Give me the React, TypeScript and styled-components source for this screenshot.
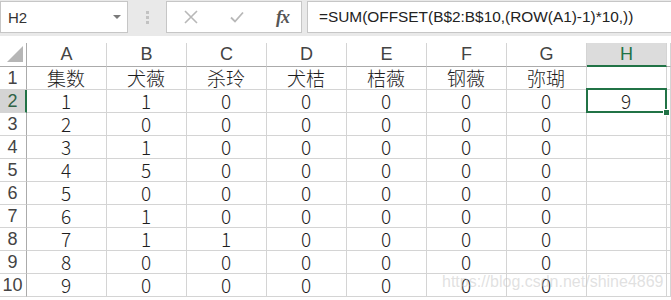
import styled, { createGlobalStyle } from "styled-components"

const COLS = ["A", "B", "C", "D", "E", "F", "G", "H", ""]
const HEAD = ["集数", "犬薇", "杀玲", "犬桔", "桔薇", "钢薇", "弥瑚", ""]
const B_VALUES = [1, 0, 1, 5, 0, 1, 1, 0, 0]
const C_VALUES = [0, 0, 0, 0, 0, 0, 1, 0, 0]

const GREEN = "#217346"
const GRID = "#d4d4d4"

const rows: string[][] = [
  ["1", ...HEAD, ""],
  ...B_VALUES.map((b, i) => [
    String(i + 2),
    String(i + 1),
    String(b),
    String(C_VALUES[i]),
    "0",
    "0",
    "0",
    "0",
    i === 0 ? "9" : "",
    "",
  ]),
]

const App = () => {
  return (
    <>
      <GlobalStyle />
      <Window>
        <FormulaBar>
          <NameBox>
            <span>H2</span>
            <DropArrow />
          </NameBox>
          <Grip>
            <i />
            <i />
            <i />
          </Grip>
          <IconBox>
            <svg width="14" height="14" viewBox="0 0 14 14">
              <path d="M1 1 L13 13 M13 1 L1 13" stroke="#b8b8b8" strokeWidth="1.6" fill="none" />
            </svg>
            <svg width="14" height="12" viewBox="0 0 14 12">
              <path d="M1 6.5 L5 10.5 L13 1.5" stroke="#b8b8b8" strokeWidth="1.8" fill="none" />
            </svg>
            <Fx>fx</Fx>
          </IconBox>
          <FormulaInput>=SUM(OFFSET(B$2:B$10,(ROW(A1)-1)*10,))</FormulaInput>
        </FormulaBar>
        <Gap />
        <Sheet>
          <Corner>
            <svg width="16" height="16" viewBox="0 0 16 16">
              <polygon points="16,0 16,16 0,16" fill="#b6b6b6" />
            </svg>
          </Corner>
          {COLS.map((c, i) => (
            <ColHeader key={i} $active={c === "H"}>
              {c}
            </ColHeader>
          ))}
          {rows.map((r, ri) =>
            r.map((v, ci) =>
              ci === 0 ? (
                <RowHeader key={`${ri}-${ci}`} $active={ri === 1}>
                  {v}
                </RowHeader>
              ) : ri === 1 && ci === 8 ? (
                <SelectedCell key={`${ri}-${ci}`}>
                  {v}
                  <FillHandle />
                </SelectedCell>
              ) : (
                <Cell key={`${ri}-${ci}`}>{v}</Cell>
              )
            )
          )}
        </Sheet>
        <Watermark>https://blog.csdn.net/shine4869</Watermark>
      </Window>
    </>
  )
}

export default App

const GlobalStyle = createGlobalStyle`
  body {
    margin: 0;
    background: #fff;
    overflow: hidden;
  }
`

const Window = styled.div`
  position: relative;
  width: 671px;
  height: 300px;
  overflow: hidden;
  font-family: "Liberation Sans", Arial, sans-serif;
`

const FormulaBar = styled.div`
  height: 36px;
  background: #e9e9e9;
  display: flex;
  align-items: flex-start;
  padding-top: 1px;
  box-sizing: border-box;
`

const NameBox = styled.div`
  width: 128px;
  height: 32px;
  box-sizing: border-box;
  background: #fff;
  border: 1px solid #c6c6c6;
  display: flex;
  align-items: center;
  justify-content: space-between;
  padding: 0 6px 0 7px;
  font-size: 15px;
  color: #333;
`

const DropArrow = styled.span`
  width: 0;
  height: 0;
  border-left: 4px solid transparent;
  border-right: 4px solid transparent;
  border-top: 4px solid #7a7a7a;
`

const Grip = styled.div`
  width: 38px;
  height: 32px;
  display: flex;
  flex-direction: column;
  align-items: center;
  justify-content: center;
  gap: 2px;

  i {
    width: 3px;
    height: 3px;
    background: #c2c2c2;
    display: block;
  }
`

const IconBox = styled.div`
  width: 136px;
  height: 32px;
  box-sizing: border-box;
  background: #fff;
  border: 1px solid #c6c6c6;
  display: flex;
  align-items: center;
  justify-content: space-between;
  padding: 0 12px 0 17px;
  gap: 30px;
`

const Fx = styled.span`
  font-family: "Liberation Serif", "Times New Roman", serif;
  font-style: italic;
  font-weight: bold;
  font-size: 18px;
  color: #555;
  letter-spacing: -1px;
`

const FormulaInput = styled.div`
  flex: 1;
  margin-left: 5px;
  height: 32px;
  box-sizing: border-box;
  background: #fff;
  border: 1px solid #c6c6c6;
  border-right: none;
  display: flex;
  align-items: center;
  padding-left: 11px;
  font-size: 15.4px;
  color: #222;
  white-space: nowrap;
`

const Gap = styled.div`
  height: 7px;
  background: #fff;
`

const Sheet = styled.div`
  display: grid;
  grid-template-columns: 27px repeat(8, 80px) 1fr;
  grid-template-rows: 24px repeat(10, 23px);
`

const Corner = styled.div`
  border-right: 1px solid #ababab;
  border-bottom: 1px solid #ababab;
  display: flex;
  align-items: flex-end;
  justify-content: flex-end;
  padding: 0 3px 4px 0;
  box-sizing: border-box;
`

const ColHeader = styled.div<{ $active?: boolean }>`
  box-sizing: border-box;
  border-right: 1px solid ${GRID};
  border-bottom: ${p => (p.$active ? `2px solid ${GREEN}` : "1px solid #ababab")};
  background: ${p => (p.$active ? "#dcdcdc" : "#fff")};
  color: ${p => (p.$active ? GREEN : "#444")};
  display: flex;
  align-items: flex-end;
  justify-content: center;
  font-size: 18px;
  line-height: 20px;
  padding-bottom: ${p => (p.$active ? "1px" : "2px")};
`

const RowHeader = styled.div<{ $active?: boolean }>`
  box-sizing: border-box;
  border-right: ${p => (p.$active ? `2px solid ${GREEN}` : "1px solid #ababab")};
  border-bottom: 1px solid ${GRID};
  background: ${p => (p.$active ? "#d4d4d4" : "#fff")};
  color: ${p => (p.$active ? "#2f6246" : "#444")};
  display: flex;
  align-items: flex-end;
  justify-content: center;
  padding: 0 ${p => (p.$active ? "0" : "1px")} 1px 0;
  font-size: 18px;
  line-height: 20px;
`

const Cell = styled.div`
  box-sizing: border-box;
  border-right: 1px solid ${GRID};
  border-bottom: 1px solid ${GRID};
  display: flex;
  align-items: flex-end;
  justify-content: center;
  font-family: "Noto Sans CJK SC", "Liberation Sans", sans-serif;
  font-weight: 300;
  font-size: 19px;
  line-height: 22px;
  color: #1e1e1e;
  padding-right: 1px;
`

const SelectedCell = styled(Cell)`
  position: relative;

  &::after {
    content: "";
    position: absolute;
    top: -2px;
    left: -1px;
    right: -1px;
    bottom: -1px;
    border: 2px solid ${GREEN};
  }
`

const FillHandle = styled.span`
  position: absolute;
  right: -4px;
  bottom: -4px;
  width: 5px;
  height: 5px;
  background: ${GREEN};
  border: 1px solid #fff;
  z-index: 2;
`

const Watermark = styled.div`
  position: absolute;
  left: 442px;
  top: 273px;
  font-size: 16px;
  color: rgba(195, 195, 195, 0.5);
  white-space: nowrap;
`
